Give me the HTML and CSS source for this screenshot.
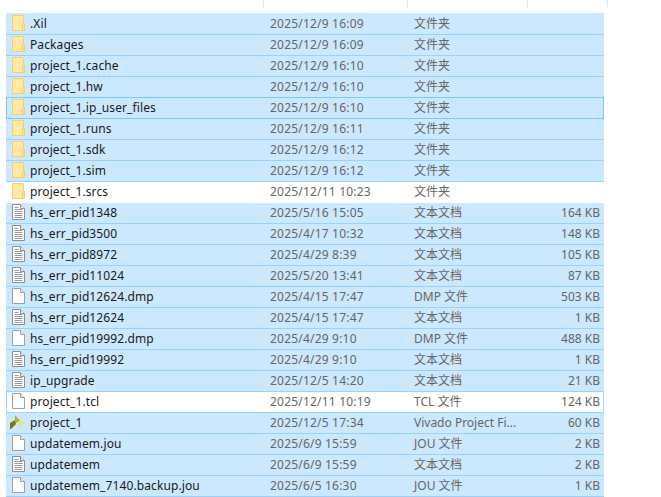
FILE: index.html
```html
<!DOCTYPE html>
<html lang="zh">
<head>
<meta charset="utf-8">
<title>Files</title>
<link rel="stylesheet" href="styles.css">
</head>
<body>
<svg class="defs" width="0" height="0" aria-hidden="true">
  <symbol id="folder" viewBox="0 0 13 16">
    <path d="M.5.5h11v15H.5z" fill="#ffe9a6" stroke="#f6cf66"/>
    <path d="M10.5 8.5h2v7h-2z" fill="#ffe08a" stroke="#f6cf66"/>
  </symbol>
  <symbol id="text" viewBox="0 0 13 16">
    <path d="M.5.5h8l4 4v11H.5z" fill="#fff" stroke="#8f8f8f"/>
    <path d="M8.5.5v4h4" fill="#eee" stroke="#8f8f8f"/>
    <path d="M2.5 3.5h4M2.5 5.5h8M2.5 7.5h8M2.5 9.5h8M2.5 11.5h8M2.5 13.5h8" stroke="#9a9a9a" fill="none"/>
  </symbol>
  <symbol id="blank" viewBox="0 0 13 16">
    <path d="M.5.5h8l4 4v11H.5z" fill="#fff" stroke="#a0a0a0"/>
    <path d="M8.5.5v4h4" fill="#eee" stroke="#a0a0a0"/>
  </symbol>
  <symbol id="vivado" viewBox="0 0 16 16">
    <path d="M5 1l5 6-4 2-1-3z" fill="#b3b32a"/>
    <path d="M0 15V9l5-3 1 4-5 5z" fill="#78780f"/>
    <path d="M7 9l4-2.5L16 10l-6 1z" fill="#e3e67f"/>
    <path d="M7 11h5l-3 3z" fill="#dfe58a"/>
  </symbol>
</svg>
<div class="header">
  <span class="col-line name-col"></span>
  <span class="col-line date-col"></span>
  <span class="col-line type-col"></span>
  <span class="col-line size-col"></span>
</div>
<div class="list">
  <div class="row sel"><svg class="icon ic-doc"><use href="#folder"/></svg><span class="name">.Xil</span><span class="date">2025/12/9 16:09</span><span class="type">文件夹</span><span class="size"></span></div>
  <div class="row sel"><svg class="icon ic-doc"><use href="#folder"/></svg><span class="name">Packages</span><span class="date">2025/12/9 16:09</span><span class="type">文件夹</span><span class="size"></span></div>
  <div class="row sel"><svg class="icon ic-doc"><use href="#folder"/></svg><span class="name">project_1.cache</span><span class="date">2025/12/9 16:10</span><span class="type">文件夹</span><span class="size"></span></div>
  <div class="row sel"><svg class="icon ic-doc"><use href="#folder"/></svg><span class="name">project_1.hw</span><span class="date">2025/12/9 16:10</span><span class="type">文件夹</span><span class="size"></span></div>
  <div class="row sel focus"><svg class="icon ic-doc"><use href="#folder"/></svg><span class="name">project_1.ip_user_files</span><span class="date">2025/12/9 16:10</span><span class="type">文件夹</span><span class="size"></span></div>
  <div class="row sel"><svg class="icon ic-doc"><use href="#folder"/></svg><span class="name">project_1.runs</span><span class="date">2025/12/9 16:11</span><span class="type">文件夹</span><span class="size"></span></div>
  <div class="row sel"><svg class="icon ic-doc"><use href="#folder"/></svg><span class="name">project_1.sdk</span><span class="date">2025/12/9 16:12</span><span class="type">文件夹</span><span class="size"></span></div>
  <div class="row sel"><svg class="icon ic-doc"><use href="#folder"/></svg><span class="name">project_1.sim</span><span class="date">2025/12/9 16:12</span><span class="type">文件夹</span><span class="size"></span></div>
  <div class="row"><svg class="icon ic-doc"><use href="#folder"/></svg><span class="name">project_1.srcs</span><span class="date">2025/12/11 10:23</span><span class="type">文件夹</span><span class="size"></span></div>
  <div class="row sel"><svg class="icon ic-doc"><use href="#text"/></svg><span class="name">hs_err_pid1348</span><span class="date">2025/5/16 15:05</span><span class="type">文本文档</span><span class="size">164 KB</span></div>
  <div class="row sel"><svg class="icon ic-doc"><use href="#text"/></svg><span class="name">hs_err_pid3500</span><span class="date">2025/4/17 10:32</span><span class="type">文本文档</span><span class="size">148 KB</span></div>
  <div class="row sel"><svg class="icon ic-doc"><use href="#text"/></svg><span class="name">hs_err_pid8972</span><span class="date">2025/4/29 8:39</span><span class="type">文本文档</span><span class="size">105 KB</span></div>
  <div class="row sel"><svg class="icon ic-doc"><use href="#text"/></svg><span class="name">hs_err_pid11024</span><span class="date">2025/5/20 13:41</span><span class="type">文本文档</span><span class="size">87 KB</span></div>
  <div class="row sel"><svg class="icon ic-doc"><use href="#blank"/></svg><span class="name">hs_err_pid12624.dmp</span><span class="date">2025/4/15 17:47</span><span class="type">DMP 文件</span><span class="size">503 KB</span></div>
  <div class="row sel"><svg class="icon ic-doc"><use href="#text"/></svg><span class="name">hs_err_pid12624</span><span class="date">2025/4/15 17:47</span><span class="type">文本文档</span><span class="size">1 KB</span></div>
  <div class="row sel"><svg class="icon ic-doc"><use href="#blank"/></svg><span class="name">hs_err_pid19992.dmp</span><span class="date">2025/4/29 9:10</span><span class="type">DMP 文件</span><span class="size">488 KB</span></div>
  <div class="row sel"><svg class="icon ic-doc"><use href="#text"/></svg><span class="name">hs_err_pid19992</span><span class="date">2025/4/29 9:10</span><span class="type">文本文档</span><span class="size">1 KB</span></div>
  <div class="row sel"><svg class="icon ic-doc"><use href="#text"/></svg><span class="name">ip_upgrade</span><span class="date">2025/12/5 14:20</span><span class="type">文本文档</span><span class="size">21 KB</span></div>
  <div class="row outline"><svg class="icon ic-doc"><use href="#blank"/></svg><span class="name">project_1.tcl</span><span class="date">2025/12/11 10:19</span><span class="type">TCL 文件</span><span class="size">124 KB</span></div>
  <div class="row sel"><svg class="icon ic-vivado"><use href="#vivado"/></svg><span class="name">project_1</span><span class="date">2025/12/5 17:34</span><span class="type">Vivado Project Fi...</span><span class="size">60 KB</span></div>
  <div class="row sel"><svg class="icon ic-doc"><use href="#blank"/></svg><span class="name">updatemem.jou</span><span class="date">2025/6/9 15:59</span><span class="type">JOU 文件</span><span class="size">2 KB</span></div>
  <div class="row sel"><svg class="icon ic-doc"><use href="#text"/></svg><span class="name">updatemem</span><span class="date">2025/6/9 15:59</span><span class="type">文本文档</span><span class="size">2 KB</span></div>
  <div class="row sel"><svg class="icon ic-doc"><use href="#blank"/></svg><span class="name">updatemem_7140.backup.jou</span><span class="date">2025/6/5 16:30</span><span class="type">JOU 文件</span><span class="size">1 KB</span></div>
</div>
</body>
</html>
```
FILE: styles.css
```css
html, body {
  margin: 0;
  padding: 0;
  background: #fff;
  overflow: hidden;
}
body {
  width: 661px;
  height: 497px;
  font: 12px/20px "Noto Sans", "Noto Sans CJK SC", sans-serif;
  color: #1a1a1a;
}
.defs {
  position: absolute;
}
.header {
  display: flex;
  height: 7px;
  margin-bottom: 6px;
  padding-left: 7px;
}
.col-line {
  display: block;
  height: 7px;
  border-right: 1px solid #e5e5e5;
  box-sizing: border-box;
}
.name-col { width: 257px; }
.date-col { width: 144px; }
.type-col { width: 120px; }
.size-col { width: 80px; }
.list {
  width: 598px;
  margin-left: 6px;
  border-top: 1px solid #cce8ff;
}
.row {
  display: flex;
  align-items: center;
  box-sizing: border-box;
  height: 21px;
  border-bottom: 1px solid transparent;
}
.sel {
  background: #cce8ff;
  border-bottom-color: #99d1ff;
}
.focus {
  border-bottom-color: #80c6ff;
  box-shadow: inset 1px 0 0 #80c6ff, inset -1px 0 0 #80c6ff, 0 -1px 0 #80c6ff;
}
.outline {
  background: #fff;
  border-bottom-color: #99d1ff;
  box-shadow: inset 1px 0 0 #99d1ff, inset -1px 0 0 #99d1ff;
}
.icon {
  flex: none;
  display: block;
  height: 16px;
  margin-bottom: 2px;
}
.ic-doc {
  width: 13px;
  margin-left: 6px;
  margin-right: 5px;
}
.ic-vivado {
  width: 16px;
  margin-left: 4px;
  margin-right: 4px;
}
.name {
  width: 240px;
  flex: none;
  white-space: nowrap;
  letter-spacing: 0.1px;
}
.date {
  width: 144px;
  flex: none;
  color: #666;
  letter-spacing: 0.2px;
}
.type {
  width: 120px;
  flex: none;
  color: #666;
  white-space: nowrap;
}
.size {
  width: 66px;
  flex: none;
  text-align: right;
  color: #666;
}
```
